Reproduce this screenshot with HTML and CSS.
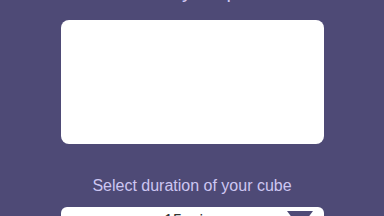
FILE: index.html
```html
<!DOCTYPE html>
<html lang="en">
<head>
    <meta charset="UTF-8">
    <meta name="viewport" content="width=device-width, initial-scale=1.0">
    <title>New Cube</title>
    <link rel="stylesheet" href="styles.css">
</head>
<body>
    <div class="form">
        <div class="label top-label">Choose your photo</div>
        <div class="message-box"></div>
        <div class="label duration-label">Select duration of your cube</div>
        <div class="select-box">
            <span class="select-value">15 mins</span>
            <svg class="select-arrow" width="26" height="14" viewBox="0 0 26 14">
                <path d="M0 0 H26 L20 8 H6 Z" fill="#4e4a76"/>
            </svg>
        </div>
    </div>
</body>
</html>
```

FILE: styles.css
```css
body { margin: 0; background-color: #4e4a76; font-family: "Liberation Sans", Arial, sans-serif; overflow: hidden; }
.form { display: flex; flex-direction: column; align-items: center; margin-top: -20px; }
.label { color: #cdc6f2; font-size: 16px; line-height: 18px; text-align: center; }
.top-label { font-size: 20px; line-height: 22px; }
.message-box { width: 263px; height: 124px; margin-top: 18px; background-color: #fff; border-radius: 8px; }
.duration-label { margin-top: 33px; }
.select-box { position: relative; width: 263px; height: 40px; margin-top: 12px; background-color: #fff; border-radius: 6px; display: flex; justify-content: center; align-items: flex-start; }
.select-value { margin-top: 5px; font-size: 16px; color: #333; }
.select-arrow { position: absolute; right: 11px; top: 4px; }
```
